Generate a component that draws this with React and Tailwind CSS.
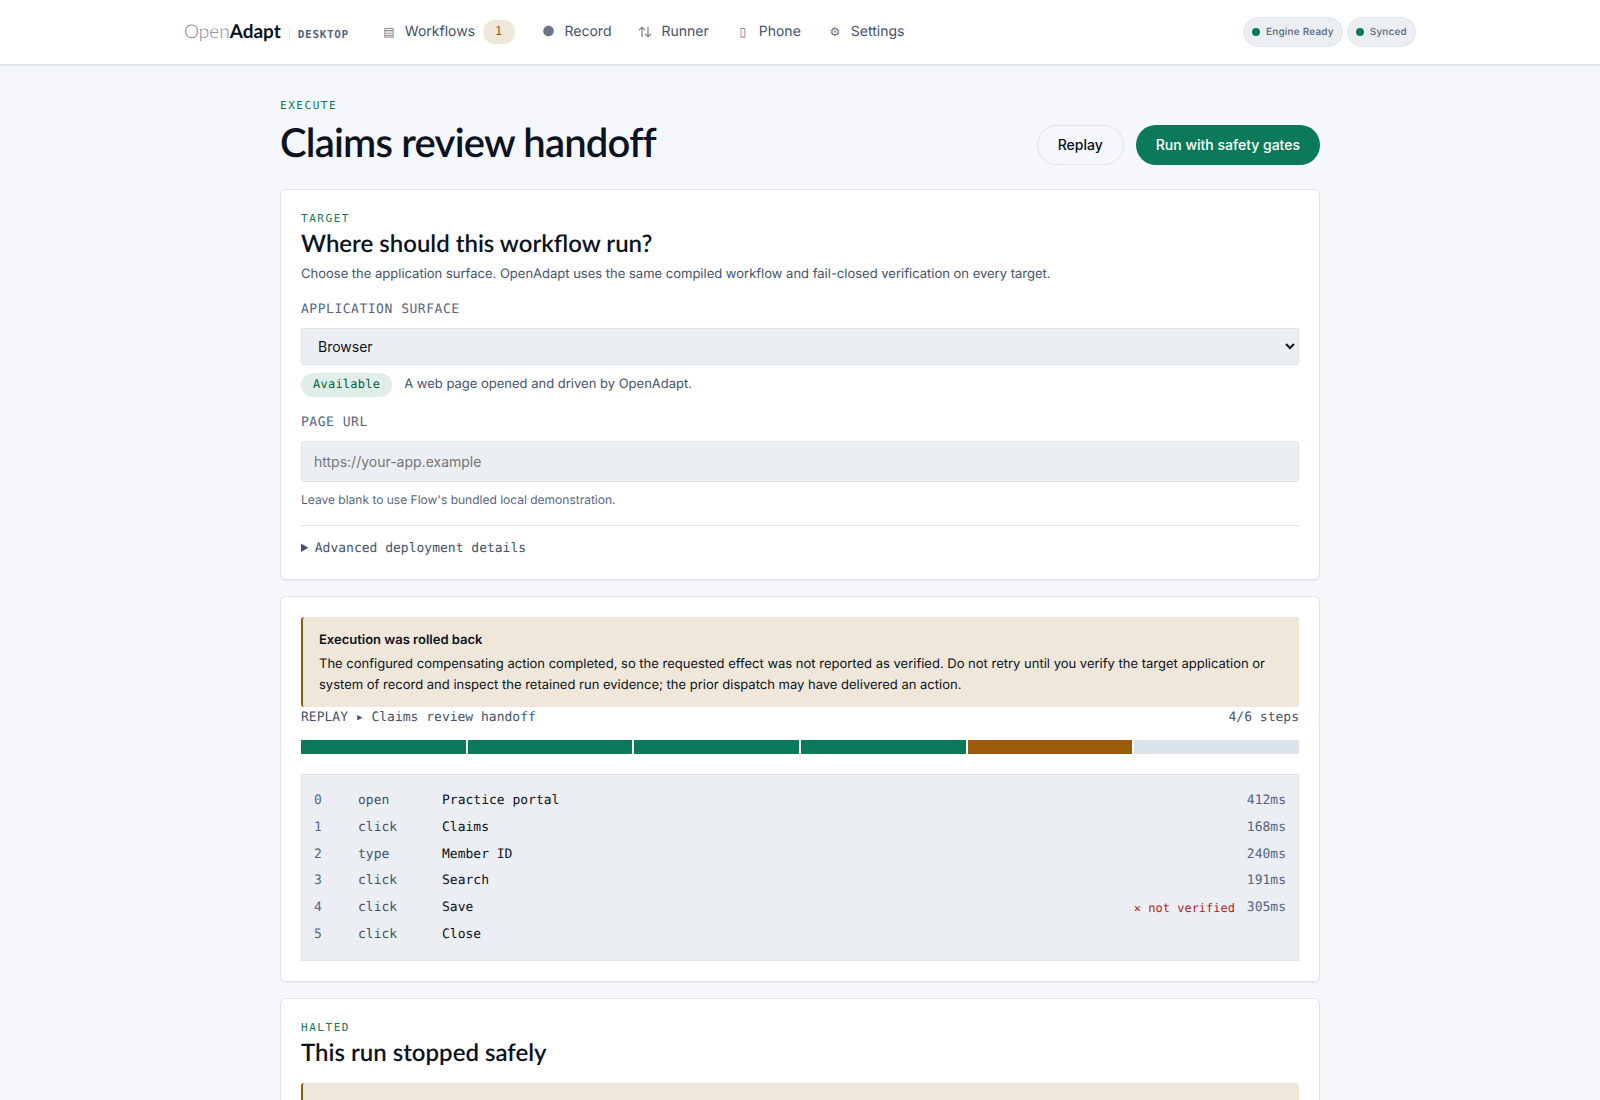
import { clsx } from "clsx";

const links = [
  { icon: "▤", label: "Workflows", count: 1 },
  { icon: "●", label: "Record" },
  { icon: <RunnerIcon />, label: "Runner" },
  { icon: "▯", label: "Phone" },
  { icon: "⚙", label: "Settings" },
];

const steps = [
  { action: "open", target: "Practice portal", time: "412ms", state: "done" },
  { action: "click", target: "Claims", time: "168ms", state: "done" },
  { action: "type", target: "Member ID", time: "240ms", state: "done" },
  { action: "click", target: "Search", time: "191ms", state: "done" },
  { action: "click", target: "Save", time: "305ms", state: "halted" },
  { action: "click", target: "Close", time: "", state: "pending" },
];

const mono = "font-['DejaVu_Sans_Mono',monospace]";
const display = "font-['Lato',sans-serif]";

function RunnerIcon() {
  return (
    <svg
      className="mx-auto h-3 w-3.5"
      viewBox="0 0 14 12"
      fill="none"
      stroke="currentColor"
      strokeWidth="1.1"
    >
      <path d="M4 11V1.2M1 4.2L4 1.2L7 4.2" />
      <path d="M10 1V10.8M7 7.8L10 10.8L13 7.8" />
    </svg>
  );
}

function Eyebrow({ children }) {
  return (
    <p
      className={clsx(
        mono,
        "text-[11px] leading-[18px] tracking-[0.14em] uppercase text-[#0b7a5a]"
      )}
    >
      {children}
    </p>
  );
}

function Card({ children }) {
  return (
    <section className="rounded-md border border-[#dce3eb] bg-white p-5 shadow-[0_1px_2px_rgba(11,18,32,0.06)]">
      {children}
    </section>
  );
}

function CardTitle({ children }) {
  return (
    <h2
      className={clsx(
        display,
        "text-2xl leading-8 font-semibold text-[#0b1220]"
      )}
    >
      {children}
    </h2>
  );
}

function Pill({ className, children }) {
  return (
    <span
      className={clsx(
        mono,
        "inline-flex h-6 items-center rounded-full px-3 pb-0.5 text-xs tracking-[0.02em]",
        className
      )}
    >
      {children}
    </span>
  );
}

function Status({ children }) {
  return (
    <span className="flex h-[30px] items-center gap-1.5 rounded-full border border-[#dce3eb] bg-[#ebeff4] px-2 text-[10px] font-medium tracking-[0.02em] text-[#56657f]">
      <span className="size-2 rounded-full bg-[#0b7a5a]" />
      {children}
    </span>
  );
}

function Notice({ title, children }) {
  return (
    <div className="rounded-[3px] border-l-2 border-[#9a5b0a] bg-[#efe7da] px-4 pt-[13px] pb-[11px] text-[13px] leading-[21px] text-[#0b1220]">
      <p className="font-semibold">{title}</p>
      <p className="mt-[3px]">{children}</p>
    </div>
  );
}

function Header() {
  return (
    <header className="border-b border-[#dce3eb] bg-white shadow-[0_1px_2px_rgba(11,18,32,0.06)]">
      <div className="mx-auto flex h-16 max-w-[1280px] items-center px-6">
        <a href="#" className="flex items-baseline">
          <span className={clsx(display, "text-[19px] text-[#0b1220]")}>
            <span className="font-light text-[#7c838f]">Open</span>
            <span className="font-bold">Adapt</span>
          </span>
          <span
            className={clsx(
              mono,
              "ml-2 border-l border-[#dce3eb] pl-2 text-[11px] leading-3 font-bold tracking-[0.06em] text-[#56657f]"
            )}
          >
            DESKTOP
          </span>
        </a>
        <nav className="ml-5 flex items-center gap-0.5">
          {links.map((link) => (
            <a
              key={link.label}
              href="#"
              className="flex items-center gap-2 px-3 text-sm text-[#44526b]"
            >
              <span
                className={clsx(
                  "w-4 text-center opacity-80",
                  link.label === "Record" ? "text-sm" : "text-xs"
                )}
                aria-hidden="true"
              >
                {link.icon}
              </span>
              {link.label}
              {link.count && (
                <Pill className="bg-[#efe7da] text-[#9a5b0a]">
                  {link.count}
                </Pill>
              )}
            </a>
          ))}
        </nav>
        <div className="ml-auto flex gap-1">
          <Status>Engine Ready</Status>
          <Status>Synced</Status>
        </div>
      </div>
    </header>
  );
}

function TargetCard() {
  return (
    <Card>
      <Eyebrow>Target</Eyebrow>
      <CardTitle>Where should this workflow run?</CardTitle>
      <p className="mt-1 text-[13px] leading-5 text-[#44526b]">
        Choose the application surface. OpenAdapt uses the same compiled
        workflow and fail-closed verification on every target.
      </p>
      <label
        htmlFor="surface"
        className={clsx(
          mono,
          "mt-4 block text-[13px] leading-5 tracking-[0.04em] uppercase text-[#56657f]"
        )}
      >
        Application surface
      </label>
      <select
        id="surface"
        className="mt-2 h-[37px] w-full rounded-[3px] border border-[#dce3eb] bg-[#ebeff4] px-3 text-sm text-[#0b1220]"
      >
        <option>Browser</option>
        <option>Desktop</option>
      </select>
      <div className="mt-2 flex items-center gap-3 text-[13px] text-[#44526b]">
        <Pill className="bg-[#e0eeea] text-[#075c43]">Available</Pill>
        A web page opened and driven by OpenAdapt.
      </div>
      <label
        htmlFor="url"
        className={clsx(
          mono,
          "mt-4 block text-[13px] leading-5 tracking-[0.04em] uppercase text-[#56657f]"
        )}
      >
        Page URL
      </label>
      <input
        id="url"
        type="url"
        placeholder="https://your-app.example"
        className="mt-2 h-[41px] w-full rounded-[3px] border border-[#dce3eb] bg-[#ebeff4] px-3 text-sm text-[#0b1220] placeholder:text-[#757575]"
      />
      <p className="mt-2 text-xs leading-5 text-[#56657f]">
        Leave blank to use Flow's bundled local demonstration.
      </p>
      <details className="mt-[15px] border-t border-[#dce3eb] pt-3">
        <summary
          className={clsx(mono, "text-[13px] leading-[21px] text-[#44526b]")}
        >
          Advanced deployment details
        </summary>
      </details>
    </Card>
  );
}

function ReplayCard() {
  return (
    <Card>
      <Notice title="Execution was rolled back">
        The configured compensating action completed, so the requested effect
        was not reported as verified. Do not retry until you verify the target
        application or system of record and inspect the retained run evidence;
        the prior dispatch may have delivered an action.
      </Notice>
      <div
        className={clsx(
          mono,
          "flex justify-between text-[13px] leading-[21px] text-[#44526b]"
        )}
      >
        <span>REPLAY ▸ Claims review handoff</span>
        <span>4/6 steps</span>
      </div>
      <div className="mt-3 flex gap-0.5">
        {steps.map((step, i) => (
          <span
            key={i}
            className={clsx(
              "h-3.5 flex-1",
              step.state === "done" && "bg-[#0b7a5a]",
              step.state === "halted" && "bg-[#9a5b0a]",
              step.state === "pending" && "bg-[#dce3eb]"
            )}
          />
        ))}
      </div>
      <div className="mt-5 border border-[#dce3eb] bg-[#ebeff4] px-3 pt-[13px] pb-3">
        <table
          className={clsx(
            mono,
            "h-40 w-full text-[13px] leading-5 text-[#56657f]"
          )}
        >
          <tbody>
            {steps.map((step, i) => (
              <tr key={i}>
                <td className="w-11 p-0">{i}</td>
                <td className="w-[84px] p-0 text-[#44526b]">{step.action}</td>
                <td className="p-0 text-[#0b1220]">{step.target}</td>
                <td className="p-0 text-right text-xs text-[#b42318]">
                  {step.state === "halted" && "✕ not verified"}
                </td>
                <td className="w-[51px] p-0 text-right">{step.time}</td>
              </tr>
            ))}
          </tbody>
        </table>
      </div>
    </Card>
  );
}

export default function App() {
  return (
    <div className="min-h-screen bg-[#f5f7fb] font-['Inter',sans-serif] text-[#0b1220] antialiased [text-rendering:geometricPrecision]">
      <Header />
      <main className="mx-auto max-w-[1088px] px-6 pt-8 pb-12">
        <div className="mb-6 flex items-end justify-between">
          <div>
            <Eyebrow>Execute</Eyebrow>
            <h1
              className={clsx(
                display,
                "mt-1 text-[40px] leading-[46px] font-semibold tracking-[-0.02em]"
              )}
            >
              Claims review handoff
            </h1>
          </div>
          <div className="flex gap-3">
            <button className="h-10 rounded-full border border-[#dce3eb] px-5 text-sm font-medium">
              Replay
            </button>
            <button className="h-10 rounded-full bg-[#0b7a5a] px-5 text-sm font-medium text-white">
              Run with safety gates
            </button>
          </div>
        </div>
        <div className="flex flex-col gap-4">
          <TargetCard />
          <ReplayCard />
          <Card>
            <Eyebrow>Halted</Eyebrow>
            <CardTitle>This run stopped safely</CardTitle>
            <div className="mt-3.5">
              <Notice title="Verification did not pass">
                The run was halted before the remaining steps.
              </Notice>
            </div>
          </Card>
        </div>
      </main>
    </div>
  );
}
